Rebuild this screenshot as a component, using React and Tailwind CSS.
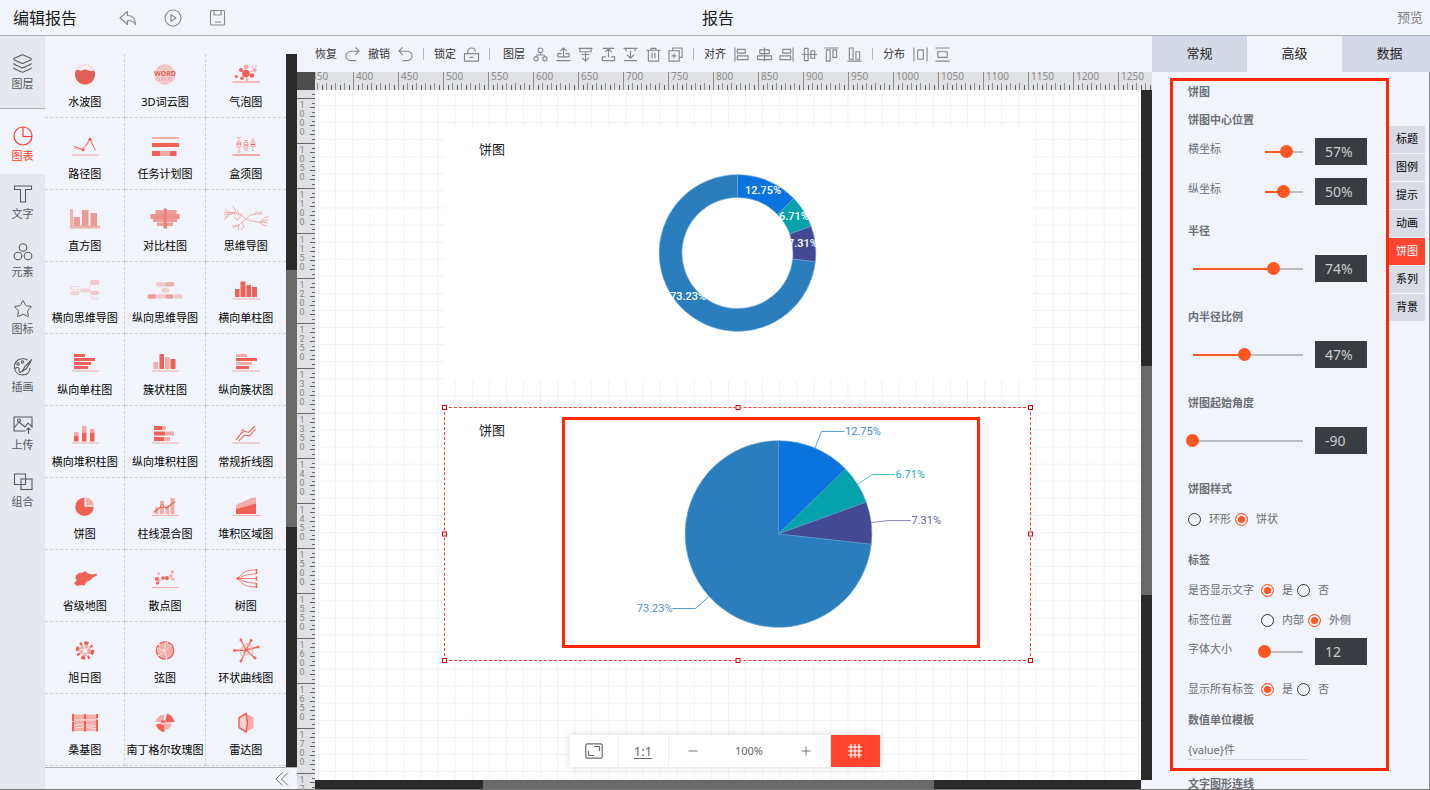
import { useState } from "react";
import { Star, Layers } from "lucide-react";

const RED = "#f06055";
const LIGHT = "#f3aca7";

const Base = ({ color = LIGHT }) => (
  <path d="M1.5 20H29" stroke={color} strokeWidth="1" />
);

/* bars: [x, y, width, height, color] */
const Bars = ({ items }) =>
  items.map(([x, y, w, h, color], i) => (
    <rect key={i} x={x} y={y} width={w} height={h} fill={color} />
  ));

const Dots = ({ items }) =>
  items.map(([cx, cy, r, color], i) => (
    <circle key={i} cx={cx} cy={cy} r={r} fill={color} />
  ));

const chartTypes = [
  {
    name: "水波图",
    icon: (
      <>
        <circle cx="15" cy="11.5" r="9.5" fill="#f8f0f3" stroke={LIGHT} strokeDasharray="1.5 1" />
        <path d="M5.8 7.5c2-1.600 4 .8 6 0s4-1.500 6.500 0 4 .4 5.900 0A10 10 0 1 1 5.800 7.500z" fill="#e25f55" />
      </>
    ),
  },
  {
    name: "3D词云图",
    icon: (
      <>
        <circle cx="15" cy="11.5" r="10.5" fill="#f3d0d0" />
        <path d="M9 3.5h12M8 5.5h13M12 20.5h6" stroke="#eab5b5" strokeDasharray="2 1" />
        <text x="15" y="12.5" fontSize="7" fontWeight="700" textAnchor="middle" fill="#e25f55">WORD</text>
        <text x="14" y="18" fontSize="5" textAnchor="middle" fill="#e79a9a">CLOUD</text>
      </>
    ),
  },
  {
    name: "气泡图",
    icon: (
      <>
        <path d="M15 11L10 7M15 11l0-6M15 11l8-4M15 11l6 2M15 11l-5 4M15 11l1 6" stroke={LIGHT} />
        <Dots
          items={[
            [15, 10.5, 3.8, RED], [10, 7, 2, RED], [15, 4, 2.4, LIGHT],
            [23.5, 7, 2, LIGHT], [21, 12.5, 2.2, RED], [5.3, 13.5, 1.5, RED],
            [11, 15.3, 1.7, RED], [16, 16.5, 1.4, LIGHT], [25, 3.5, 0.9, LIGHT], [22, 4, 0.9, LIGHT],
          ]}
        />
        <path d="M1.5 19H29" stroke={LIGHT} strokeWidth="1.5" />
      </>
    ),
  },
  {
    name: "路径图",
    icon: (
      <>
        <path d="M4 11.5l9 3 7-10.5 5.500 11.500" fill="none" stroke={RED} />
        <path d="M4 13.5l9 1 5-6 2-4" fill="none" stroke={LIGHT} />
        <Dots items={[[20, 4.3, 1.5, RED], [13, 14.8, 1.5, RED]]} />
        <Base />
      </>
    ),
  },
  {
    name: "任务计划图",
    icon: (
      <Bars
        items={[
          [2, 2, 27, 2, LIGHT], [2, 8, 27, 4, RED], [2, 16, 8, 5, RED],
          [10, 16, 10, 5, LIGHT], [20, 16, 6.5, 5, RED],
        ]}
      />
    ),
  },
  {
    name: "盒须图",
    icon: (
      <>
        <g fill="none" stroke={LIGHT}>
          <path d="M6 2.5h4M8 2.5v5M8 12v5M6 17h4M13 5.5h4M15 5.5v2M15 13v2M13 15h4M20 6h4M22 3v4M22 12v4" />
          <rect x="6" y="7" width="4" height="5" />
          <rect x="13" y="7.5" width="4" height="5.5" />
          <rect x="20" y="8" width="4" height="3.5" />
          <path d="M6 9h4M13 10h4M20 9.5h4" stroke={RED} />
        </g>
        <Base color={RED} />
      </>
    ),
  },
  {
    name: "直方图",
    icon: (
      <>
        <path d="M0 2h3v16.5h27v3H0z" fill="#f0b3ae" />
        <Bars items={[[3.5, 10, 6.5, 9, "#e99b95"], [12, 3, 6.5, 16, "#e99b95"], [20.5, 6, 6.5, 13, "#e99b95"]]} />
      </>
    ),
  },
  {
    name: "对比柱图",
    icon: (
      <Bars
        items={[
          [5.5, 3, 21, 4, "#ef9f9a"], [0.5, 7, 29, 5, "#e9948f"], [3, 12, 24, 3, "#ef9f9a"],
          [7, 15.5, 16, 3.5, "#ef9f9a"], [13.5, 1.5, 3.5, 20, "#e5857f"],
        ]}
      />
    ),
  },
  {
    name: "思维导图",
    icon: (
      <g fill="none" stroke="#edaaa6" strokeWidth=".9">
        <path d="M-6 2l4 3 6 1M-7 5l5 1 6 0M-7 8l5-1 6-1M-6 11l4-3 6-2M-7 13l5-5" />
        <path d="M2-1l2 4 1 3M6 3l2 4M4 6l6 2 5 4 5 2 8 1 4 3 4 1M28 15l9-2M30 15l7 1M29 15l6-5 3 0" />
        <path d="M15 12l4-4 6-1 7-1M22 8l5-4M27 7l4-3M15 12l-4 3-3 3-7 1M8 18l-6 3M8 18l-1 5M11 15l2 5-3 3M11 6l-1 2M3 10l4 3M6 14l4-6" />
      </g>
    ),
  },
  {
    name: "横向思维导图",
    icon: (
      <g fill="#f0c9c8">
        <rect x="1" y="7.5" width="7.5" height="3" fill="none" stroke="#f0cfcd" strokeWidth=".8" />
        <rect x=".5" y="12" width="9" height="4.3" rx="2" fill="#eed3d3" />
        <rect x="10" y="9.5" width="10" height="4" rx="2" fill="#eed3d3" />
        <rect x="20" y="1" width="9.5" height="5" rx="2" />
        <rect x="20.5" y="11.7" width="9" height="4.3" rx="2" />
        <path d="M20 5v13M8 12h3M20 18.5h8v2h-6v-2" fill="none" stroke="#f0d3d2" strokeWidth=".8" />
      </g>
    ),
  },
  {
    name: "纵向思维导图",
    icon: (
      <g fill="#efcccb">
        <rect x="6" y="3" width="9" height="4.5" rx="2" />
        <rect x="15" y="3" width="9" height="4.5" rx="2" fill="#ecb0ae" />
        <rect x="11" y="9.3" width="8.5" height="4" rx="2" />
        <path d="M15 7v8" stroke="#efcccb" />
        <rect x="-2.5" y="15.3" width="9" height="4.5" rx="2" fill="#e9a09d" />
        <rect x="6.3" y="15.3" width="9" height="4.5" rx="2" />
        <rect x="15" y="15.3" width="8.5" height="4.5" rx="2" fill="#e9a09d" />
        <rect x="23.5" y="15.3" width="9" height="4.5" rx="2" />
      </g>
    ),
  },
  {
    name: "横向单柱图",
    icon: (
      <>
        <Bars items={[[4, 10, 4.5, 8, RED], [9.5, 2.5, 5, 15.5, RED], [15.5, 6, 4.5, 12, RED], [21, 8, 5, 10, RED]]} />
        <Base />
      </>
    ),
  },
  {
    name: "纵向单柱图",
    icon: (
      <>
        <Bars items={[[4, 3, 11, 3, RED], [4, 7, 21, 3, RED], [4, 11, 17, 3, RED], [4, 15, 14, 3, RED]]} />
        <Base />
      </>
    ),
  },
  {
    name: "簇状柱图",
    icon: (
      <>
        <Bars items={[[3.5, 11, 4.5, 7, LIGHT], [9.5, 3, 4.5, 15, RED], [15, 6, 4.5, 12, LIGHT], [20.5, 8, 5, 10, RED]]} />
        <Base />
      </>
    ),
  },
  {
    name: "纵向簇状图",
    icon: (
      <>
        <Bars items={[[5, 3, 11, 3, LIGHT], [5, 7, 21, 3, RED], [5, 11, 16, 3, LIGHT], [5, 15, 13, 3, RED]]} />
        <Base />
      </>
    ),
  },
  {
    name: "横向堆积柱图",
    icon: (
      <>
        <Bars
          items={[
            [4, 9, 4.5, 4, LIGHT], [4, 13, 4.5, 5.5, RED], [12, 3, 4.5, 6.5, LIGHT],
            [12, 9.5, 4.5, 9, RED], [20, 6, 4.5, 3.5, LIGHT], [20, 9.5, 4.5, 9, RED],
          ]}
        />
        <Base />
      </>
    ),
  },
  {
    name: "纵向堆积柱图",
    icon: (
      <>
        <Bars
          items={[
            [4, 3, 8, 4, RED], [12, 3, 4, 4, LIGHT], [4, 8.5, 11, 4, RED],
            [15, 8.5, 9, 4, LIGHT], [4, 14, 10, 4, RED], [14, 14, 6, 4, LIGHT],
          ]}
        />
        <Base />
      </>
    ),
  },
  {
    name: "常规折线图",
    icon: (
      <>
        <path d="M5 17L12 8l5.500 1.500L24 3M8 18l5.500-6 5 .8L24.500 6" fill="none" stroke={RED} strokeWidth="1.100" />
        <circle cx="12" cy="8" r="1.3" fill="#f1f4fa" stroke={RED} strokeWidth=".8" />
        <Base />
      </>
    ),
  },
  {
    name: "饼图",
    icon: (
      <>
        <path d="M14.5 2.5a9.200 9.200 0 1 0 9.200 9.200h-9.200z" fill={RED} />
        <path d="M16 2.500a8.500 8.500 0 0 1 7.800 8H16z" fill={LIGHT} />
      </>
    ),
  },
  {
    name: "柱线混合图",
    icon: (
      <>
        <Bars items={[[5, 12, 3.5, 7, LIGHT], [10, 6, 4, 13, LIGHT], [15.5, 10.5, 3.5, 8.5, LIGHT], [20.5, 3, 4, 16, LIGHT]]} />
        <path d="M3.500 17.500l8.500-6.500 4.500 2L25 6.500" fill="none" stroke={RED} strokeWidth="1.200" />
        <circle cx="12" cy="11" r="1.4" fill="#fff" stroke={RED} />
        <path d="M1.5 20.5H29" stroke={LIGHT} />
      </>
    ),
  },
  {
    name: "堆积区域图",
    icon: (
      <>
        <path d="M5 10l5-2.500 5-2 5-2.500 5-.5V12L5 16z" fill={LIGHT} />
        <path d="M5 14l6-1.500 6-1.500 8-2.500V19H5z" fill={RED} />
        <path d="M1.5 20.5H29" stroke={LIGHT} />
      </>
    ),
  },
  {
    name: "省级地图",
    icon: (
      <path d="M6 8.500L9 6l4-.5 2-1.500 2.500 2.300 4 1.200 5-.8.5 1.800-4 2-3 3-4 1.500-1.500 3.500-3-.5-4 1-3.500-2.500 2.500-3L5.500 11z" fill={RED} />
    ),
  },
  {
    name: "散点图",
    icon: (
      <>
        <Dots
          items={[
            [7, 12, 2, RED], [7.5, 16, 1.6, RED], [8.5, 6.5, 1.3, LIGHT], [13, 11, 1.8, RED],
            [17, 11, 2, RED], [21, 9, 1.7, LIGHT], [22.5, 5, 1.7, LIGHT], [23, 12, 1.6, LIGHT], [9, 13.5, 1.6, LIGHT],
          ]}
        />
        <path d="M1.5 20.5H29" stroke={LIGHT} />
      </>
    ),
  },
  {
    name: "树图",
    icon: (
      <g fill="none" stroke={RED} strokeWidth=".8">
        <path d="M6 11.500h20M7 11.500C11 5 16 3 25 3M7 11.500C11 18 16 20 25 20M8 11.500c4-3 9-4.500 17-4.500M8 11.500c4 3 9 4.500 17 4.500" />
        <path d="M25.500 2v5M25.500 9.500v4M25.500 16v5" strokeWidth="1.500" />
        <circle cx="7" cy="11.5" r="1.200" fill={RED} />
      </g>
    ),
  },
  {
    name: "旭日图",
    icon: (
      <g fill="none">
        <circle cx="15" cy="11.5" r="7.5" stroke={RED} strokeWidth="3.500" strokeDasharray="4 3 2 2.500" />
        <circle cx="15" cy="11.5" r="4" stroke={LIGHT} strokeWidth="3.500" strokeDasharray="3.500 1" />
      </g>
    ),
  },
  {
    name: "弦图",
    icon: (
      <>
        <circle cx="15" cy="11.5" r="7.5" fill={LIGHT} />
        <circle cx="15" cy="11.5" r="8.5" fill="none" stroke={RED} strokeWidth="1.600" strokeDasharray="11 1.500 8 1" />
        <path d="M16 3l-2 8 3 8M7 9l8 3 7-6M9 17l5-5" fill="none" stroke="#f9e4e4" />
      </>
    ),
  },
  {
    name: "环状曲线图",
    icon: (
      <g fill="none" stroke={RED} strokeWidth=".9">
        <path d="M15 11L10 1M15 11l5-9.500M15 11l12-3M15 11l9 8M15 11l-5 11M15 11L3.500 11.500" strokeWidth="1.300" />
        <path d="M11 5l9 1-2 8-7 3-3-6 9-7M19 5l3 9-9 2-2-9" stroke={LIGHT} />
        <Dots items={[[10, 1, 1.1, RED], [20, 1.5, 1.1, RED], [27, 8, 1.1, RED], [24, 19, 1.1, RED], [10, 22, 1.1, RED], [3.5, 11.5, 1.1, RED]]} />
      </g>
    ),
  },
  {
    name: "桑基图",
    icon: (
      <>
        <rect x="2.5" y="3.5" width="25" height="16.5" fill={LIGHT} />
        <path d="M4 9h22M4 14.500c4 0 6-2 11-1s8 3 11 1M4 17l11-1 11 2" fill="none" stroke="#fbeeee" strokeWidth=".9" />
        <path d="M3 3v7M3 11v9.500M15 3v5M15 10v10.500M27 3v4M27 9v11.500" stroke={RED} strokeWidth="2" />
      </>
    ),
  },
  {
    name: "南丁格尔玫瑰图",
    icon: (
      <>
        <path d="M14 11V3.500a9 9 0 0 0-8.500 7.500zM15 12.500V19c3 0 6-2.500 6.500-6.500z" fill={LIGHT} />
        <path d="M15 11.500L17 2.500c4 1.500 6.500 4 7.500 8.500zM14.500 11.500l-8.500 2c.5 3 4 7.500 8.500 7.500zM11 9.500h4v4h-4z" fill={RED} />
      </>
    ),
  },
  {
    name: "雷达图",
    icon: (
      <>
        <path d="M15 2.500l7.500 4V17L15 21z" fill={LIGHT} />
        <path d="M15 2.500L8 7v9.500l7 4.500 1.500-9z" fill="#f8d4d1" stroke={RED} strokeWidth="1.500" />
      </>
    ),
  },
];

const navItems = [
  {
    name: "文字",
    icon: <path d="M1.5 2h17v3.500h-6V18h-5V5.500h-6z" />,
  },
  {
    name: "元素",
    icon: (
      <>
        <circle cx="10" cy="5.500" r="3.800" />
        <circle cx="5" cy="14" r="3.800" />
        <circle cx="15" cy="14" r="3.800" />
      </>
    ),
  },
  { name: "图标", lucide: Star },
  {
    name: "插画",
    icon: (
      <>
        <path d="M14.500 3A8 8 0 0 0 9 1.800C4 2 1 6 1.500 10.500c.3 4.500 3.500 7.500 8 7.500 4 0 7-2.500 7.500-7" />
        <path d="M18.800 2.500L12 9.500l-3 5 4.500-3zM2 11.500c3-2 4.500-.5 4 1.500s1 3 2.500 1.500" />
        <circle cx="5" cy="7" r="1.200" />
        <circle cx="9.500" cy="5" r="1.200" />
      </>
    ),
  },
  {
    name: "上传",
    icon: (
      <>
        <path d="M12.500 16H1V2h18v11M1 13l5-6 6 5 3-4 4 3.500" />
        <circle cx="6" cy="5.500" r="1.500" />
        <path d="M15.500 19v-6M13.500 15l2-2 2 2" />
      </>
    ),
  },
  {
    name: "组合",
    icon: (
      <>
        <path d="M8 12.500H1.500V2h11v4.500" />
        <rect x="8" y="7" width="11" height="10.500" />
        <path d="M12.500 7v5.500H8" />
      </>
    ),
  },
];

const layerTools = [
  ["组织", "M10.500 3.500a2.500 2.500 0 1 1-5 0 2.500 2.500 0 0 1 5 0zM5.500 12.500a2.200 2.200 0 1 1-4.500 0 2.200 2.200 0 0 1 4.500 0zM15 12.500a2.200 2.200 0 1 1-4.500 0 2.200 2.200 0 0 1 4.500 0zM8 6v2.500M3.300 10.500l1-2h7.400l1 2"],
  ["上移一层", "M8 10V1M4.500 4.500L8 1l3.500 3.500M6 7H2v3.500h12V7h-4M.5 14.500h15"],
  ["下移一层", "M.5 1.500h15M2 1.500V5h12V1.500M8 5v10M4.500 11.500L8 15l3.500-3.500M4 8h8"],
  ["置顶", "M2 1.500h12M8 11V2M4.500 5.500L8 2l3.500 3.500M5 10.500H1.500v4h13v-4H11"],
  ["置底", "M.5 1.500h15M3 1.500V4.500M13 1.500V4.500M8 4v8M4.500 8.500L8 12l3.500-3.500M1 14.500h14"],
  ["删除", "M.5 3.500h15M5.500 3.500v-2h5v2M2.500 3.500v11.500h11v-11.500M6.500 6v6M9.500 6v6"],
  ["复制", "M5 4V1h10v10h-3M1 4h11v11H1zM6.500 7v5M4 9.500h5"],
];

const alignTools = [
  ["左对齐", "M1 .5v15M3.500 2.500h8.500v4H3.500zM3.500 9.500h11.500v4h-11.500z"],
  ["水平居中", "M8 .5v15M3 3h10v4H3zM.5 9.500h15v4H.5z"],
  ["右对齐", "M15 .5v15M4 2.500h8.500v4H4zM1 9.500h11.500v4H1z"],
  ["垂直居中", "M0 8h16M2.500 1.500h4v13h-4zM9.500 4h4v8h-4z"],
  ["顶对齐", "M.5 1h15M2.500 3h4v12h-4zM9.500 3h4v8h-4z"],
  ["底对齐", "M.5 15h15M2.500 1h4v12h-4zM9.500 5h4v8h-4z"],
];

const spreadTools = [
  ["水平分布", "M1 .5v15M15 .5v15M5 3h6v10H5z"],
  ["垂直分布", "M.5 1h15M.5 15h15M3 5h10v6H3z"],
];

const ToolButton = ({ label, d }) => (
  <button type="button" aria-label={label} className="w-[15px] h-[15px] shrink-0">
    <svg viewBox="0 0 16 16" className="w-full h-full overflow-visible" fill="none" stroke="#83888f" strokeWidth="1.200" strokeLinejoin="round">
      <path d={d} />
    </svg>
  </button>
);

const Divider = () => <span className="w-px h-3 mx-[2px] bg-[#b5b9bf]" />;

const Header = () => (
  <header className="h-9 shrink-0 flex items-center pl-[13px] pr-[7px] border-b border-[#aeb3bd]">
    <div className="flex-1 flex items-center">
      <h1 className="text-[16px] mr-[42px]">编辑报告</h1>
      <div className="flex gap-[27px]">
        <button type="button" aria-label="返回">
          <svg viewBox="0 0 18 18" className="w-[18px] h-[18px]" fill="none" stroke="#888" strokeWidth="1.100" strokeLinejoin="round">
            <path d="M1 9l7.500-6.500v4C14 6.500 16.500 10 16.500 15.500c-1.500-3-4-4-8-4v4z" />
          </svg>
        </button>
        <button type="button" aria-label="播放">
          <svg viewBox="0 0 18 18" className="w-[18px] h-[18px]" fill="none" stroke="#888" strokeWidth="1.100" strokeLinejoin="round">
            <circle cx="9" cy="9" r="8" />
            <path d="M7 5.800v6.400L12 9z" />
          </svg>
        </button>
        <button type="button" aria-label="保存">
          <svg viewBox="0 0 18 18" className="w-[18px] h-[18px]" fill="none" stroke="#888" strokeWidth="1.100">
            <rect x="1.500" y="1.500" width="14" height="14.500" rx="1" />
            <path d="M5 1.500V6h7V1.500M6 13h6" />
          </svg>
        </button>
      </div>
    </div>
    <h2 className="text-[16px]">报告</h2>
    <div className="flex-1 flex justify-end">
      <a href="#preview" className="text-[13px] text-[#7b7f88]">预览</a>
    </div>
  </header>
);

const SideNav = () => (
  <nav className="w-[45px] shrink-0 bg-[#e5e9ef] text-[11px] leading-4 text-[#555a61]">
    <button type="button" className="w-full h-[73px] flex flex-col items-center justify-center gap-[2px] border-b border-[#aeb3bd]">
      <Layers size={21} strokeWidth={1.2} />
      图层
    </button>
    <button type="button" className="w-full h-[65px] pt-[17px] flex flex-col items-center gap-[2px] bg-[#f1f4fa] text-[#ff3b26]">
      <svg viewBox="0 0 20 20" className="w-5 h-5" fill="none" stroke="currentColor" strokeWidth="1.200">
        <circle cx="10" cy="10" r="9" />
        <path d="M10 1v9.500h9" />
      </svg>
      图表
    </button>
    <div className="h-[346px] flex flex-col">
      {navItems.map((item) => (
        <button
          key={item.name}
          type="button"
          className="flex-1 flex flex-col items-center justify-center gap-[2px]"
        >
          {item.lucide ? (
            <item.lucide size={20} strokeWidth={1.2} />
          ) : (
            <svg viewBox="0 0 20 20" className="w-5 h-5" fill="none" stroke="currentColor" strokeWidth="1.100">
              {item.icon}
            </svg>
          )}
          {item.name}
        </button>
      ))}
    </div>
  </nav>
);

const ChartPanel = () => (
  <section className="w-[252px] shrink-0 flex flex-col pt-[18px]">
    <div className="flex-1 min-h-0 flex overflow-hidden">
      <div className="flex-1 grid grid-cols-3 content-start">
        {chartTypes.map((chart, i) => (
          <button
            key={chart.name}
            type="button"
            className={`${i < 3 ? "h-16" : "h-[72px]"} ${
              i % 3 < 2 ? "border-r" : ""
            } flex flex-col items-center justify-end gap-[7px] pb-[7px] border-b border-dashed border-[#cdd0d7] text-[11px] leading-4 text-black whitespace-nowrap`}
          >
            <svg viewBox="0 0 30 24" className="w-[30px] h-6 overflow-visible">
              {chart.icon}
            </svg>
            {chart.name}
          </button>
        ))}
      </div>
      <div className="w-[11px] flex flex-col bg-[#2a2a2a]">
        <div className="grow-[216]" />
        <div className="grow-[257] bg-[#696969]" />
        <div className="grow-[240]" />
      </div>
    </div>
    <div className="h-[22px] shrink-0 flex items-center justify-end pr-2 border-t border-[#aeb3bd]">
      <button type="button" aria-label="收起">
        <svg viewBox="0 0 14 14" className="w-[14px] h-[14px]" fill="none" stroke="#777">
          <path d="M7.500 .5L1 7l6.500 6.500M13 .5L6.500 7l6.500 6.500" />
        </svg>
      </button>
    </div>
  </section>
);

const Toolbar = () => (
  <div className="h-9 shrink-0 flex items-center gap-2 pl-[18px] text-[11px] text-[#333] whitespace-nowrap">
    <span>恢复</span>
    <ToolButton label="恢复" d="M11 .5l4 4-4 4M15 4.500H6a5 5 0 0 0 0 10h6" />
    <span>撤销</span>
    <ToolButton label="撤销" d="M5 .5l-4 4 4 4M1 4.500h9a5 5 0 0 1 0 10H5" />
    <Divider />
    <span>锁定</span>
    <ToolButton label="锁定" d="M.5 7h15v8H.5zM4 7V4.500a4 3.500 0 0 1 8 0V5M6 11h4" />
    <Divider />
    <span className="pl-[3px]">图层</span>
    <div className="w-[150px] flex justify-between">
      {layerTools.map(([label, d]) => (
        <ToolButton key={label} label={label} d={d} />
      ))}
    </div>
    <Divider />
    <span>对齐</span>
    <div className="w-32 flex justify-between">
      {alignTools.map(([label, d]) => (
        <ToolButton key={label} label={label} d={d} />
      ))}
    </div>
    <Divider />
    <span>分布</span>
    <div className="flex gap-[7px]">
      {spreadTools.map(([label, d]) => (
        <ToolButton key={label} label={label} d={d} />
      ))}
    </div>
  </div>
);

const UNIT = 0.9;

const rulerTicks = (from, to) =>
  [...Array((to - from) / 5).keys()].map((i) => from + i * 5);

const TopRuler = () => (
  <svg className="flex-1 min-w-0 h-[18px] bg-[#e0e1e5]" shapeRendering="crispEdges">
    {rulerTicks(350, 1290).map((v) => {
      const x = 38 + (v - 400) * UNIT;
      const major = v % 50 === 0;
      const top = major ? 0 : v % 10 === 0 ? 11 : 13;
      return (
        <g key={v}>
          <rect x={x} y={top} width="1" height={18 - top} fill={v % 10 === 0 ? "#8d8d8d" : "#606060"} />
          {major && (
            <text x={x + 3} y="8" fontSize="10" fill="#8c8c8c">{v}</text>
          )}
        </g>
      );
    })}
  </svg>
);

const LeftRuler = () => (
  <svg className="w-[18px] shrink-0 h-full bg-[#e0e1e5]" shapeRendering="crispEdges">
    {rulerTicks(995, 1770).map((v) => {
      const y = 8 + (v - 1000) * UNIT;
      const major = v % 50 === 0;
      const left = major ? 0 : v % 10 === 0 ? 13 : 15;
      return (
        <g key={v}>
          <rect x={left} y={y} width={18 - left} height="1" fill="#666" />
          {major && (
            <text fontSize="9" fontFamily="Roboto, sans-serif" textAnchor="middle" fill="#858585">
              {String(v).split("").slice(0, v > 1745 ? 2 : 4).map((digit, i) => (
                <tspan key={i} x="5" y={y + 10 + i * 9}>
                  {digit}
                </tspan>
              ))}
            </text>
          )}
        </g>
      );
    })}
  </svg>
);

const slices = [
  { value: 12.75, color: "#0a73dd" },
  { value: 6.71, color: "#06a3ae" },
  { value: 7.31, color: "#434a93" },
  { value: 73.23, color: "#2b7ebd" },
];

const arcs = slices.map((slice, i) => {
  const start = slices.slice(0, i).reduce((acc, s) => acc + s.value, 0);
  return { ...slice, start, end: start + slice.value };
});

const point = (cx, cy, r, percent) => {
  const angle = (percent / 100) * Math.PI * 2 - Math.PI / 2;
  return `${cx + r * Math.cos(angle)} ${cy + r * Math.sin(angle)}`;
};

const slicePath = (cx, cy, r, inner, { start, end, value }) => {
  const large = value > 50 ? 1 : 0;
  return `M${point(cx, cy, r, start)}A${r} ${r} 0 ${large} 1 ${point(cx, cy, r, end)}L${point(cx, cy, inner, end)}A${inner} ${inner} 0 ${large} 0 ${point(cx, cy, inner, start)}Z`;
};

const DonutChart = () => (
  <svg viewBox="0 0 585 253" className="w-full h-full" fontFamily="Roboto, sans-serif">
    {arcs.map((arc) => (
      <path
        key={arc.value}
        d={slicePath(292.5, 126, 78.3, 55.6, arc)}
        fill={arc.color}
        stroke="#6aa5d2"
        strokeWidth=".6"
      />
    ))}
    <g fontSize="11" fontWeight="500" fill="#fff" textAnchor="middle">
      <text x="318" y="67">12.75%</text>
      <text x="349" y="93">6.71%</text>
      <text x="358" y="120">7.31%</text>
      <text x="243" y="173">73.23%</text>
    </g>
  </svg>
);

const PieChart = () => (
  <svg viewBox="1 1 585 252" className="w-full h-full" fontFamily="Roboto, sans-serif">
    {arcs.map((arc) => (
      <path
        key={arc.value}
        d={slicePath(334.5, 127, 93.3, 0.01, arc)}
        fill={arc.color}
        stroke="#5b9bcb"
        strokeWidth=".6"
      />
    ))}
    <g fill="none">
      <path d="M371 41l6.500-16.500h23" stroke="#5c9fe6" />
      <path d="M414 77l14.500-9.500h22.500" stroke="#55bfc6" />
      <path d="M427 115.500l18-2h22" stroke="#8a8ebd" />
      <path d="M265 189.500l-13.500 12h-23" stroke="#559ad0" />
    </g>
    <g fontSize="11">
      <text x="401" y="28" fill="#3a8ae0">12.75%</text>
      <text x="451.500" y="71" fill="#22adb6">6.71%</text>
      <text x="467.500" y="117" fill="#5d63a3">7.31%</text>
      <text x="228.500" y="205" fill="#4a92c9" textAnchor="end">73.23%</text>
    </g>
  </svg>
);

const handles = [
  "-left-[3px] -top-[3px]",
  "left-1/2 -top-[3px] -translate-x-1/2",
  "-right-[3px] -top-[3px]",
  "-left-[3px] top-1/2 -translate-y-1/2",
  "-right-[3px] top-1/2 -translate-y-1/2",
  "-left-[3px] -bottom-[3px]",
  "left-1/2 -bottom-[3px] -translate-x-1/2",
  "-right-[3px] -bottom-[3px]",
];

const Canvas = () => (
  <div className="relative flex-1 min-w-0 bg-white overflow-hidden">
    <svg className="absolute inset-0 w-full h-full">
      <defs>
        <pattern id="grid" x="3" y="15" width="17.08" height="17.08" patternUnits="userSpaceOnUse">
          <path d="M.5 0v17.080M0 .5h17.080" stroke="#eff2f8" fill="none" />
        </pattern>
      </defs>
      <rect width="100%" height="100%" fill="url(#grid)" />
    </svg>

    <div className="absolute left-[130px] top-[37px] w-[585px] h-[253px] bg-white">
      <DonutChart />
      <h3 className="absolute left-[34px] top-3 text-[13px] leading-5">饼图</h3>
    </div>

    <div className="absolute left-[129px] top-[317px] w-[587px] h-[254px] bg-white border border-dashed border-[#ff3b26]">
      <PieChart />
      <h3 className="absolute left-[34px] top-3 text-[13px] leading-5">饼图</h3>
      <div className="absolute left-[117px] top-[9px] w-[418px] h-[231px] border-[3px] border-[#ff2505]" />
      {handles.map((pos) => (
        <span key={pos} className={`absolute w-[5px] h-[5px] bg-white border border-[#e60000] ${pos}`} />
      ))}
    </div>
  </div>
);

const ZoomBar = () => (
  <div className="absolute bottom-[22px] left-1/2 -translate-x-1/2 w-[310px] h-8 flex gap-px bg-[#eceef1] shadow-[0_0_8px_rgba(0,0,0,0.15)] text-[11px] text-[#666]">
    <button type="button" aria-label="适应画布" className="w-12 flex items-center justify-center bg-white">
      <svg viewBox="0 0 18 16" className="w-[18px] h-4" fill="none" stroke="#666b72" strokeWidth="1.200">
        <rect x=".8" y=".8" width="16.400" height="14.400" rx="1.500" />
        <path d="M9 3.500h5.500V8M3.500 8v4.500H9" />
      </svg>
    </button>
    <button type="button" className="w-[49px] flex items-center justify-center bg-white">
      <span className="text-[13px] leading-[14px] border-b border-[#666]">1:1</span>
    </button>
    <div className="flex-1 flex items-center justify-between px-[18px] bg-white">
      <button type="button" aria-label="缩小">
        <svg viewBox="0 0 12 12" className="w-3 h-3" stroke="#777"><path d="M1.500 6h9" /></svg>
      </button>
      <span>100%</span>
      <button type="button" aria-label="放大">
        <svg viewBox="0 0 12 12" className="w-3 h-3" stroke="#777"><path d="M1.500 6h9M6 1.500v9" /></svg>
      </button>
    </div>
    <button type="button" aria-label="网格" className="w-[49px] flex items-center justify-center bg-[#ff452e]">
      <svg viewBox="0 0 16 16" className="w-4 h-4" stroke="#fff" strokeWidth="1.200">
        <path d="M4 1v14M8 1v14M12 1v14M1 4h14M1 8h14M1 12h14" />
      </svg>
    </button>
  </div>
);

const Workspace = () => (
  <main className="relative flex-1 min-w-0 flex flex-col">
    <Toolbar />
    <div className="flex shrink-0">
      <div className="w-[18px] h-[18px] bg-[#4b4b4b]" />
      <TopRuler />
    </div>
    <div className="flex-1 min-h-0 flex">
      <LeftRuler />
      <div className="flex-1 min-w-0 flex flex-col">
        <div className="flex-1 min-h-0 flex">
          <Canvas />
          <div className="w-[11px] flex flex-col bg-[#2a2a2a]">
            <div className="grow-[276]" />
            <div className="grow-[229] bg-[#696969]" />
            <div className="grow-[185]" />
          </div>
        </div>
        <div className="h-[9px] mr-[11px] flex bg-[#2a2a2a]">
          <div className="grow-[168]" />
          <div className="grow-[451] bg-[#696969]" />
          <div className="grow-[207]" />
        </div>
      </div>
    </div>
    <ZoomBar />
  </main>
);

const Heading = ({ children, className = "" }) => (
  <h3 className={`font-bold leading-[22px] ${className}`}>{children}</h3>
);

const SliderRow = ({ id, label, initial, min = 0, max = 100, unit = "", className = "" }) => {
  const [value, setValue] = useState(initial);
  const percent = ((value - min) / (max - min)) * 100;

  return (
    <div className={`flex h-[27px] ${className}`}>
      {label && <label htmlFor={id} className="leading-[22px]">{label}</label>}
      <input
        id={id}
        type="range"
        aria-label={label ? undefined : id}
        min={min}
        max={max}
        value={value}
        onChange={(e) => setValue(Number(e.target.value))}
        className={`${
          label ? "w-[51px] ml-auto" : "w-[123px] -ml-[2px]"
        } mr-[6px] h-[27px] shrink-0 appearance-none bg-center bg-no-repeat bg-[length:calc(100%-13px)_2px] [&::-webkit-slider-thumb]:appearance-none [&::-webkit-slider-thumb]:w-[13px] [&::-webkit-slider-thumb]:h-[13px] [&::-webkit-slider-thumb]:rounded-full [&::-webkit-slider-thumb]:bg-[#ff5722]`}
        style={{
          backgroundImage: `linear-gradient(to right, #ff5722 ${percent}%, #bbbcbf ${percent}%)`,
        }}
      />
      <input
        type="text"
        aria-label={`${label || id} value`}
        readOnly
        value={`${value}${unit}`}
        className="w-[52px] h-[27px] pl-[10px] bg-[#393d42] text-[14px] text-[#c9cbce]"
      />
    </div>
  );
};

const RadioRow = ({ name, label, options, initial, className = "" }) => {
  const [selected, setSelected] = useState(initial);

  return (
    <div className={`flex items-center h-[22px] ${className}`}>
      {label && <span className="w-[73px]">{label}</span>}
      <div className="flex gap-1">
        {options.map((option) => (
          <label key={option} className="flex items-center gap-2">
            <input
              type="radio"
              name={name}
              checked={selected === option}
              onChange={() => setSelected(option)}
              className="appearance-none w-[13px] h-[13px] rounded-full border border-[#333] checked:border-[#ff5722] checked:bg-[#ff5722] checked:shadow-[inset_0_0_0_2px_#f1f4fa]"
            />
            {option}
          </label>
        ))}
      </div>
    </div>
  );
};

const sideTabs = ["标题", "图例", "提示", "动画", "饼图", "系列", "背景"];

const SettingsPanel = () => {
  const [tab, setTab] = useState("高级");
  const [section, setSection] = useState("饼图");

  return (
    <aside className="w-[278px] shrink-0 flex flex-col overflow-hidden">
      <div className="h-9 shrink-0 flex text-[13px]">
        {["常规", "高级", "数据"].map((name) => (
          <button
            key={name}
            type="button"
            onClick={() => setTab(name)}
            className={`w-[95px] shrink-0 text-[#222] ${tab === name ? "" : "bg-[#d3d9e5]"}`}
          >
            {name}
          </button>
        ))}
      </div>

      <div className="flex-1 min-h-0 flex pt-[6px] pl-[18px] pr-1 border-r border-[#85878b] overflow-hidden">
        <div className="flex-1 min-w-0 text-[11px] text-[#6c6f75]">
          <div className="border-[3px] border-[#ff2505] pl-[15px] pr-[19px] pb-2">
            <Heading>饼图</Heading>
            <Heading className="mt-[6px] mb-[7px]">饼图中心位置</Heading>
            <SliderRow id="centerX" label="横坐标" initial={57} unit="%" />
            <SliderRow id="centerY" label="纵坐标" initial={50} unit="%" className="mt-[13px]" />
            <Heading className="mt-[15px] mb-[13px]">半径</Heading>
            <SliderRow id="radius" initial={74} unit="%" />
            <Heading className="mt-6 mb-[13px]">内半径比例</Heading>
            <SliderRow id="innerRadius" initial={47} unit="%" />
            <Heading className="mt-6 mb-[13px]">饼图起始角度</Heading>
            <SliderRow id="startAngle" initial={-90} min={-90} max={270} />
            <Heading className="mt-6">饼图样式</Heading>
            <RadioRow name="shape" options={["环形", "饼状"]} initial="饼状" className="mt-2" />
            <Heading className="mt-[19px]">标签</Heading>
            <RadioRow name="showText" label="是否显示文字" options={["是", "否"]} initial="是" className="mt-2" />
            <RadioRow name="labelPosition" label="标签位置" options={["内部", "外侧"]} initial="外侧" className="mt-2" />
            <SliderRow id="fontSize" label="字体大小" initial={12} min={12} max={60} className="mt-[7px]" />
            <RadioRow name="showAll" label="显示所有标签" options={["是", "否"]} initial="是" className="mt-[13px]" />
            <Heading className="mt-[9px]">
              <label htmlFor="template">数值单位模板</label>
            </Heading>
            <input
              id="template"
              type="text"
              defaultValue="{value}件"
              className="block w-[119px] h-[21px] mt-2 border-b border-[#d8dadf]"
            />
          </div>
          <Heading className="mt-[2px] pl-[18px]">文字图形连线</Heading>
        </div>

        <div className="w-9 shrink-0 flex flex-col gap-px pt-12 text-[11px]">
          {sideTabs.map((name) => (
            <button
              key={name}
              type="button"
              onClick={() => setSection(name)}
              className={`h-[27px] ${
                section === name ? "bg-[#ff452e] text-white" : "bg-[#d9dce5] text-black"
              }`}
            >
              {name}
            </button>
          ))}
        </div>
      </div>
    </aside>
  );
};

const App = () => {
  return (
    <div className="h-screen flex flex-col overflow-hidden border-b border-[#777] bg-[#f1f4fa] text-[#1a1a1a] font-['Noto_Sans','Noto_Sans_CJK_SC',sans-serif]">
      <Header />
      <div className="flex-1 min-h-0 flex">
        <SideNav />
        <ChartPanel />
        <Workspace />
        <SettingsPanel />
      </div>
    </div>
  );
};

export default App;
